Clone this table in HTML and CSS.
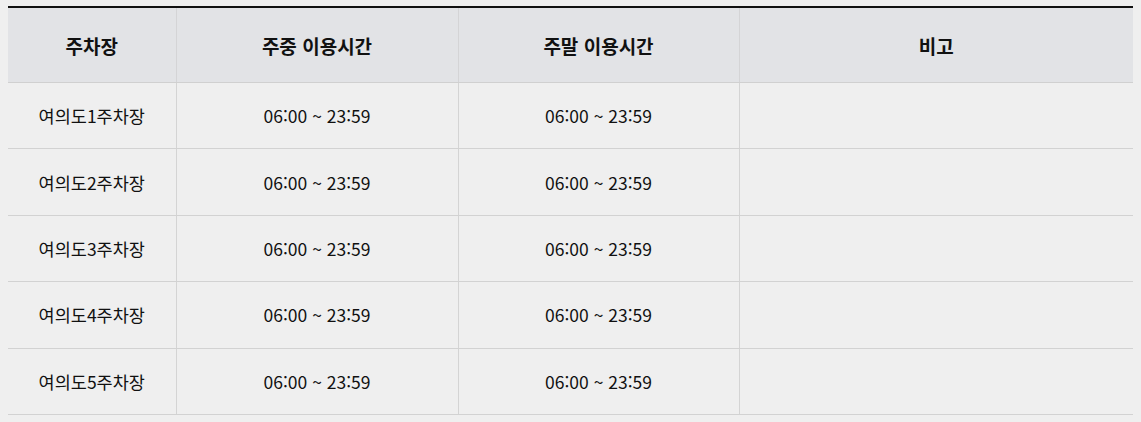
FILE: index.html
```html
<!DOCTYPE html>
<html lang="ko">
<head>
<meta charset="utf-8">
<link rel="stylesheet" href="styles.css">
</head>
<body>
<table class="hours">
  <colgroup>
    <col class="c1"><col class="c2"><col class="c3"><col class="c4">
  </colgroup>
  <thead>
    <tr><th>주차장</th><th>주중 이용시간</th><th>주말 이용시간</th><th>비고</th></tr>
  </thead>
  <tbody>
    <tr><td>여의도1주차장</td><td>06:00 ~ 23:59</td><td>06:00 ~ 23:59</td><td></td></tr>
    <tr><td>여의도2주차장</td><td>06:00 ~ 23:59</td><td>06:00 ~ 23:59</td><td></td></tr>
    <tr><td>여의도3주차장</td><td>06:00 ~ 23:59</td><td>06:00 ~ 23:59</td><td></td></tr>
    <tr><td>여의도4주차장</td><td>06:00 ~ 23:59</td><td>06:00 ~ 23:59</td><td></td></tr>
    <tr><td>여의도5주차장</td><td>06:00 ~ 23:59</td><td>06:00 ~ 23:59</td><td></td></tr>
  </tbody>
</table>
</body>
</html>
```
FILE: styles.css
```css
html, body {
  margin: 0;
  background: #efefef;
}
body {
  padding: 6px 8px 0 8px;
  font-family: "Noto Sans CJK KR", "Noto Sans", sans-serif;
  color: #111;
}
.hours {
  width: 1125px;
  border-collapse: collapse;
  table-layout: fixed;
  border-top: 2px solid #111;
}
.c1 { width: 168px; }
.c2 { width: 282px; }
.c3 { width: 281px; }
.c4 { width: 394px; }
.hours th {
  height: 74px;
  padding: 0;
  background: #e2e3e6;
  font-size: 19px;
  font-weight: 700;
  text-align: center;
  border-left: 1px solid #d4d4d6;
  border-bottom: 1px solid #d0d0d0;
}
.hours td {
  height: 65.4px;
  padding: 0;
  font-size: 17.5px;
  text-align: center;
  border-left: 1px solid #d4d4d4;
  border-bottom: 1px solid #d2d2d2;
}
.hours th:first-child, .hours td:first-child {
  border-left: none;
}
```
